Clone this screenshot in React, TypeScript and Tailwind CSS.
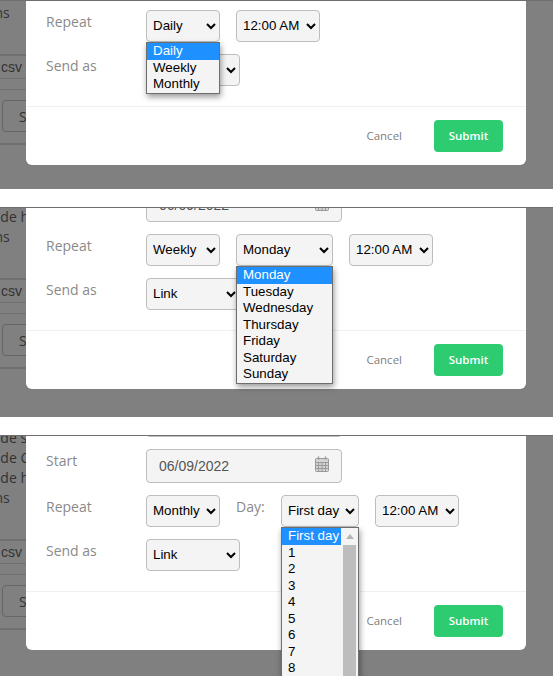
import React from "react";

const selectCls =
  "h-8 shrink-0 rounded border border-[#bdbdbd] bg-[#f4f4f4] pb-[2px] pl-[2px] text-[13.33px] text-black font-['Liberation_Sans',Arial,sans-serif]";
const labelCls = "text-[14px] leading-[24px] text-[#8a8a8a] font-['Open_Sans',sans-serif]";

function Sel({ w, opts }: { w: string; opts: string[] }) {
  return (
    <select className={`${selectCls} ${w}`} defaultValue={opts[0]}>
      {opts.map((o) => (
        <option key={o}>{o}</option>
      ))}
    </select>
  );
}

function Menu({ items, scroll }: { items: string[]; scroll?: boolean }) {
  return (
    <div className="absolute left-0 top-full z-10 flex w-full border border-[#6e6e6e] bg-[#f4f4f4] text-[13.33px] text-black shadow-[1px_3px_6px_rgba(0,0,0,0.4)] font-['Liberation_Sans',Arial,sans-serif]">
      <div className="min-w-0 flex-1">
        {items.map((it, i) => (
          <div
            key={it}
            className={`h-[16.5px] whitespace-nowrap pl-[6px] leading-[16px] ${i === 0 ? "bg-[#1e90ff] font-medium text-white" : ""}`}
          >
            {it}
          </div>
        ))}
      </div>
      {scroll && (
        <div className="mx-[2px] flex w-[13px] shrink-0 flex-col bg-[#bdbdbd]">
          <div className="flex h-[17px] items-center justify-center bg-[#f4f4f4]">
            <svg width="8" height="5" viewBox="0 0 8 5">
              <path d="M0 5 L4 0 L8 5 Z" fill="#b5b5b5" />
            </svg>
          </div>
        </div>
      )}
    </div>
  );
}

function Backdrop({ offset }: { offset: string }) {
  return (
    <div className="w-[26px] shrink-0 overflow-hidden">
      <div className={`${offset} w-[26px] font-['Open_Sans',sans-serif] text-[14px] text-[#333]`}>
        <div className="-ml-[31px] h-[20px] whitespace-nowrap leading-[20px]">Include s</div>
        <div className="-ml-[31px] h-[20px] whitespace-nowrap leading-[20px]">Include C</div>
        <div className="-ml-[31px] h-[20px] whitespace-nowrap leading-[20px]">Include h</div>
        <div className="-ml-[42px] h-[19px] whitespace-nowrap leading-[19px]">Options</div>
        <div className="mt-[8px] h-[25px] border-b border-[#6f6f6f]" />
        <div className="h-[24px] border-b border-t border-[#6f6f6f] pl-[1px] font-['Liberation_Sans',sans-serif] text-[14px] leading-[22px]">
          csv
        </div>
        <div className="h-[11px] border-b border-[#6f6f6f]" />
        <div className="ml-[2px] mt-[10px] flex h-[32px] w-[40px] items-center rounded border border-[#666] pl-[16px] text-[#333]">
          S
        </div>
        <div className="mt-[11px] h-[2px] bg-[#6f6f6f]" />
      </div>
    </div>
  );
}

function Footer() {
  return (
    <div className="mt-[20px] flex h-[59px] items-center justify-end gap-[32px] border-t border-[#f0f0f0] pb-[1px] pr-[23px] font-['Open_Sans',sans-serif] text-[11.5px]">
      <span className="text-[#808080]">Cancel</span>
      <button className="h-8 w-[69px] rounded bg-[#2ecc71] font-semibold text-white">Submit</button>
    </div>
  );
}

function Row({ label, children }: { label: string; children: React.ReactNode }) {
  return (
    <div className="flex items-start pl-[20px]">
      <div className={`w-[100px] shrink-0 ${labelCls}`}>{label}</div>
      {children}
    </div>
  );
}

function DateBox({ cls, text }: { cls: string; text: string }) {
  return (
    <div className={`flex w-[196px] items-center justify-between rounded border border-[#bdbdbd] bg-[#f4f4f4] px-[12px] ${cls}`}>
      <span className="text-[14px] text-[#555] font-['Liberation_Sans',Arial,sans-serif]">{text}</span>
      <svg className="-mt-[5px]" width="14" height="16" viewBox="0 0 14 16" fill="none" stroke="#9a9a9a" strokeWidth="1">
        <rect x="0.5" y="2.5" width="13" height="13" rx="1" fill="#d4d4d4" />
        <path d="M0.5 6.5h13M0.5 9.5h13M0.5 12.5h13M3.5 6.5v9M7 6.5v9M10.5 6.5v9" />
        <path d="M3.5 0.5v3M10.5 0.5v3" strokeWidth="1.5" />
      </svg>
    </div>
  );
}

const time = ["12:00 AM"];
const link = ["Link"];

export default function App() {
  return (
    <div className="flex h-[676px] w-[553px] flex-col overflow-hidden bg-white">
      {/* Panel 1 */}
      <div className="flex h-[189px] shrink-0 overflow-hidden border-t border-[#6e6e6e] bg-[#808080]">
        <Backdrop offset="-mt-[58px]" />
        <div className="h-[164px] w-[500px] shrink-0 rounded-b-md bg-white">
          <div className="flex flex-col gap-3 pt-[9px]">
            <Row label="Repeat">
              <div className="relative">
                <Sel w="w-[74px]" opts={["Daily"]} />
                <Menu items={["Daily", "Weekly", "Monthly"]} />
              </div>
              <div className="ml-4">
                <Sel w="w-[84px]" opts={time} />
              </div>
            </Row>
            <Row label="Send as">
              <Sel w="w-[94px]" opts={link} />
            </Row>
          </div>
          <Footer />
        </div>
      </div>

      <div className="h-[18px] shrink-0" />

      {/* Panel 2 */}
      <div className="flex h-[210px] shrink-0 overflow-hidden border-t border-[#6e6e6e] bg-[#808080]">
        <Backdrop offset="-mt-[41px]" />
        <div className="h-[181px] w-[500px] shrink-0 rounded-b-md bg-white">
          <div className="flex flex-col gap-3">
            <div className="-mt-[20px] pl-[120px]">
              <DateBox cls="h-[34px]" text="06/09/2022" />
            </div>
            <Row label="Repeat">
              <Sel w="w-[74px]" opts={["Weekly"]} />
              <div className="relative ml-4">
                <Sel w="w-[97px]" opts={["Monday"]} />
                <Menu items={["Monday", "Tuesday", "Wednesday", "Thursday", "Friday", "Saturday", "Sunday"]} />
              </div>
              <div className="ml-4">
                <Sel w="w-[84px]" opts={time} />
              </div>
            </Row>
            <Row label="Send as">
              <Sel w="w-[94px]" opts={link} />
            </Row>
          </div>
          <Footer />
        </div>
      </div>

      <div className="h-[18px] shrink-0" />

      {/* Panel 3 */}
      <div className="flex h-[241px] shrink-0 overflow-hidden border-t border-[#6e6e6e] bg-[#808080]">
        <Backdrop offset="-mt-[8px]" />
        <div className="h-[214px] w-[500px] shrink-0 rounded-b-md bg-white">
          <div className="flex flex-col gap-3">
            <div className="-mt-[33px] pl-[120px]">
              <div className="h-[34px] w-[196px] rounded border border-[#bdbdbd] bg-[#f4f4f4]" />
            </div>
            <Row label="Start">
              <DateBox cls="h-[34px]" text="06/09/2022" />
            </Row>
            <Row label="Repeat">
              <Sel w="w-[74px]" opts={["Monthly"]} />
              <div className={`ml-4 w-[45px] ${labelCls}`}>Day:</div>
              <div className="relative">
                <Sel w="w-[78px]" opts={["First day"]} />
                <Menu scroll items={["First day", "1", "2", "3", "4", "5", "6", "7", "8", "9"]} />
              </div>
              <div className="ml-4">
                <Sel w="w-[84px]" opts={time} />
              </div>
            </Row>
            <Row label="Send as">
              <Sel w="w-[94px]" opts={link} />
            </Row>
          </div>
          <Footer />
        </div>
      </div>
    </div>
  );
}
